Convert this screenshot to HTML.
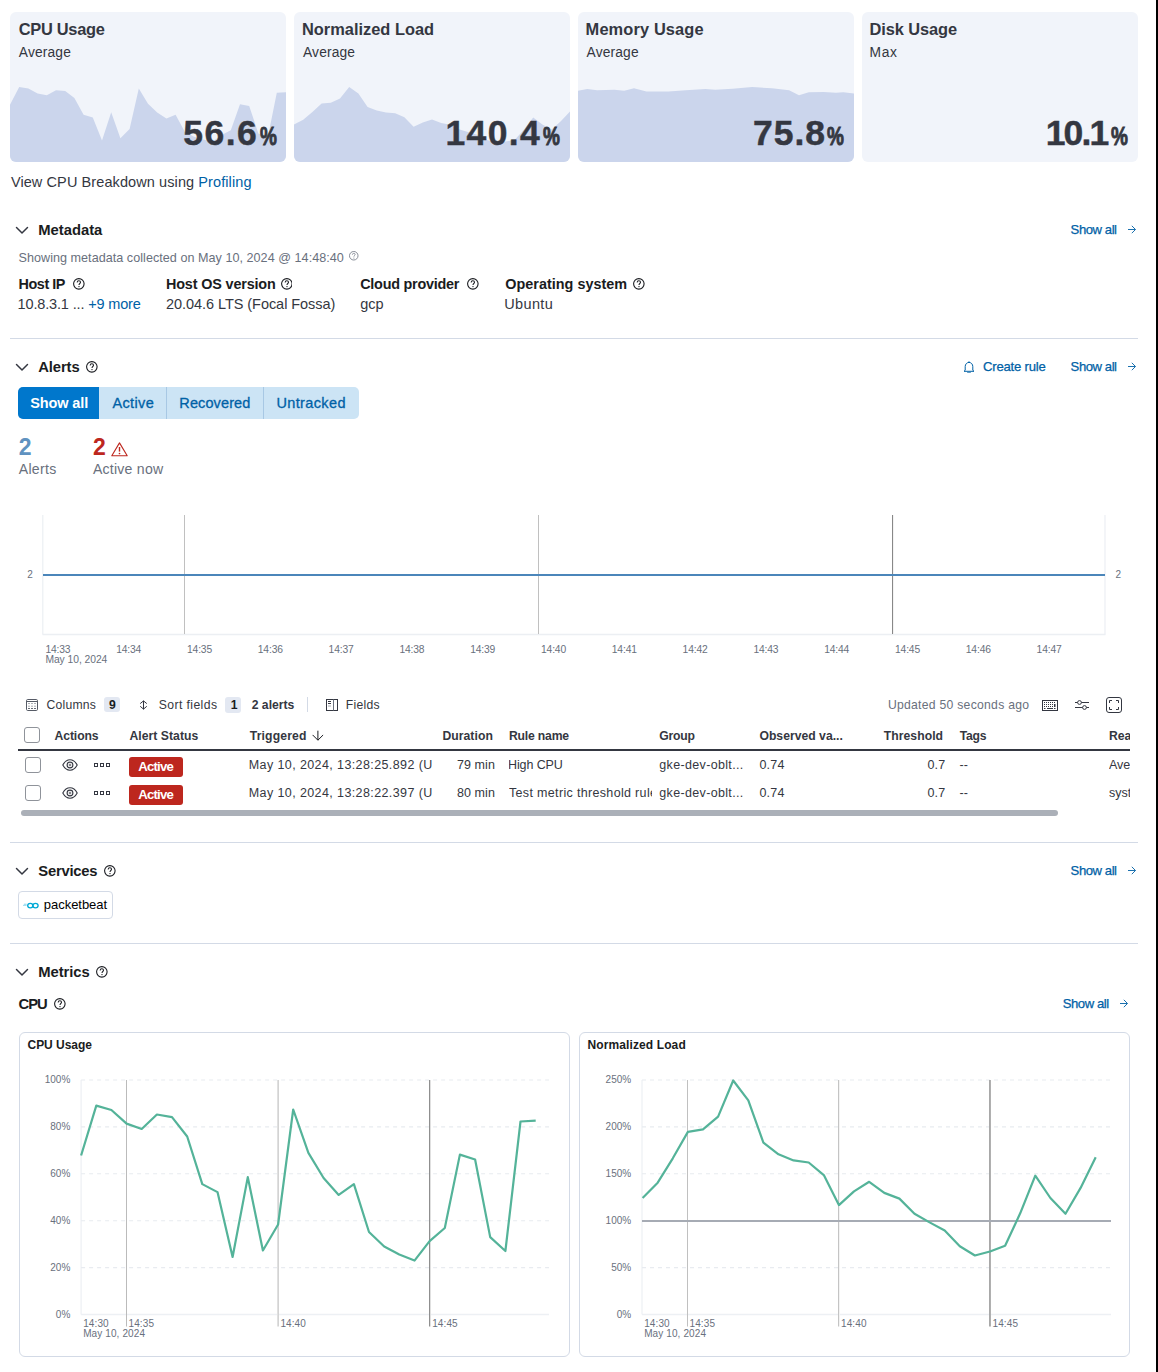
<!DOCTYPE html><html><head><meta charset="utf-8"><title>Host</title><style>
*{box-sizing:border-box;margin:0;padding:0}
html,body{width:1158px;height:1372px;overflow:hidden;background:#fff}
body{position:relative;font-family:"Liberation Sans",sans-serif;color:#343741}
.a{position:absolute;white-space:nowrap;line-height:1}
.card{position:absolute;top:12px;width:276px;height:150px;background:#f1f4fa;border-radius:6px;overflow:hidden}
.hr{position:absolute;left:10px;width:1128px;height:1px;background:#d3dae6}
</style></head><body><div class="card" style="left:10px"><svg width="276" height="150" style="position:absolute;left:0;top:0"><path d="M0,150 L0.0,92.7 L9.2,75.0 L18.4,76.6 L27.6,81.4 L36.8,83.3 L46.0,78.2 L55.2,79.1 L64.4,86.0 L73.6,102.8 L82.8,105.6 L92.0,128.5 L101.2,100.3 L110.4,126.2 L119.6,117.0 L128.8,76.4 L138.0,91.8 L147.2,100.6 L156.4,106.6 L165.6,102.8 L174.8,119.7 L184.0,124.8 L193.2,127.6 L202.4,129.8 L211.6,122.9 L220.8,118.2 L230.0,92.3 L239.2,94.1 L248.4,121.5 L257.6,126.4 L266.8,80.7 L276.0,80.3 L276,150 Z" fill="#cbd5ec"/></svg></div><div class="card" style="left:294px"><svg width="276" height="150" style="position:absolute;left:0;top:0"><path d="M0,150 L0.0,112.6 L9.2,107.7 L18.4,99.9 L27.6,91.5 L36.8,90.7 L46.0,86.6 L55.2,75.1 L64.4,81.4 L73.6,94.9 L82.8,98.6 L92.0,100.6 L101.2,101.2 L110.4,105.3 L119.6,114.8 L128.8,110.5 L138.0,107.4 L147.2,110.9 L156.4,112.7 L165.6,117.6 L174.8,120.3 L184.0,122.9 L193.2,128.0 L202.4,130.9 L211.6,129.6 L220.8,127.8 L230.0,117.4 L239.2,105.4 L248.4,112.6 L257.6,117.6 L266.8,109.3 L276.0,99.6 L276,150 Z" fill="#cbd5ec"/></svg></div><div class="card" style="left:578px"><svg width="276" height="150" style="position:absolute;left:0;top:0"><path d="M0,150 L0.0,78.7 L9.3,77.0 L19.2,78.3 L36.4,77.8 L46.2,78.7 L56.0,76.3 L68.4,79.5 L90.5,79.5 L107.8,78.3 L127.4,77.0 L137.3,77.8 L154.5,76.8 L174.2,75.1 L193.9,76.3 L211.1,78.3 L221.0,83.2 L230.8,80.2 L245.6,80.0 L257.9,80.7 L265.3,80.2 L276.0,81.4 L276,150 Z" fill="#cbd5ec"/></svg></div><div class="card" style="left:862px"></div><div class="a" style="left:18.80px;top:21.20px;font-size:16.4px;color:#343741;font-weight:700;letter-spacing:-0.293px;">CPU Usage</div><div class="a" style="left:302.00px;top:21.20px;font-size:16.4px;color:#343741;font-weight:700;">Normalized Load</div><div class="a" style="left:585.60px;top:21.20px;font-size:16.4px;color:#343741;font-weight:700;letter-spacing:0.129px;">Memory Usage</div><div class="a" style="left:869.50px;top:21.20px;font-size:16.4px;color:#343741;font-weight:700;letter-spacing:-0.084px;">Disk Usage</div><div class="a" style="left:18.80px;top:45.90px;font-size:13.8px;color:#343741;letter-spacing:0.156px;">Average</div><div class="a" style="left:303.00px;top:45.90px;font-size:13.8px;color:#343741;letter-spacing:0.139px;">Average</div><div class="a" style="left:586.60px;top:45.90px;font-size:13.8px;color:#343741;letter-spacing:0.139px;">Average</div><div class="a" style="left:869.50px;top:45.90px;font-size:13.8px;color:#343741;letter-spacing:0.667px;">Max</div><div class="a" style="left:183.30px;top:115.65px;font-size:35.5px;color:#343741;font-weight:700;letter-spacing:1.450px;-webkit-text-stroke:0.45px #343741;">56.6</div><div class="a" style="left:259.5px;top:123.5px;font-size:25px;font-weight:700;color:#343741;transform:scaleX(0.76);transform-origin:0 0;-webkit-text-stroke:0.9px #343741">%</div><div class="a" style="left:445.50px;top:115.65px;font-size:35.5px;color:#343741;font-weight:700;letter-spacing:1.352px;-webkit-text-stroke:0.45px #343741;">140.4</div><div class="a" style="left:542.8px;top:123.5px;font-size:25px;font-weight:700;color:#343741;transform:scaleX(0.76);transform-origin:0 0;-webkit-text-stroke:0.9px #343741">%</div><div class="a" style="left:753.00px;top:115.65px;font-size:35.5px;color:#343741;font-weight:700;letter-spacing:0.983px;-webkit-text-stroke:0.45px #343741;">75.8</div><div class="a" style="left:827.3px;top:123.5px;font-size:25px;font-weight:700;color:#343741;transform:scaleX(0.76);transform-origin:0 0;-webkit-text-stroke:0.9px #343741">%</div><div class="a" style="left:1045.70px;top:115.65px;font-size:35.5px;color:#343741;font-weight:700;letter-spacing:-1.817px;-webkit-text-stroke:0.45px #343741;">10.1</div><div class="a" style="left:1110.5px;top:123.5px;font-size:25px;font-weight:700;color:#343741;transform:scaleX(0.76);transform-origin:0 0;-webkit-text-stroke:0.9px #343741">%</div><div class="a" style="left:10.90px;top:175.15px;font-size:14.5px;color:#343741;letter-spacing:0.093px;">View CPU Breakdown using <span style="color:#0061a6">Profiling</span></div><svg class="a" style="left:15.3px;top:226.1px" width="14" height="8" viewBox="0 0 14 8"><path d="M1.5 1.5 L7 6.9 L12.5 1.5" fill="none" stroke="#343741" stroke-width="1.45" stroke-linecap="round" stroke-linejoin="round"/></svg><div class="a" style="left:38.30px;top:223.20px;font-size:14.8px;color:#1a1c21;font-weight:700;letter-spacing:-0.015px;">Metadata</div><div class="a" style="left:1070.60px;top:223.35px;font-size:13.1px;color:#0061a6;letter-spacing:-0.440px;-webkit-text-stroke:0.25px #0061a6;">Show all</div><svg class="a" style="left:1128.3px;top:224.8px" width="8" height="9" viewBox="0 0 8 9"><path d="M0 4.5 H7.3 M3.8 0.8 L7.5 4.5 L3.8 8.2" fill="none" stroke="#0061a6" stroke-width="0.9"/></svg><div class="a" style="left:18.50px;top:252.10px;font-size:12.6px;color:#69707d;letter-spacing:0.032px;">Showing metadata collected on May 10, 2024 @ 14:48:40</div><svg class="a" style="left:349px;top:251.2px" width="9.5" height="9.5" viewBox="0 0 16 16"><circle cx="8" cy="8" r="7.2" fill="none" stroke="#7a808c" stroke-width="1.5"/><path d="M5.7 6.2 C5.7 4.8 6.7 3.9 8 3.9 C9.4 3.9 10.3 4.8 10.3 5.9 C10.3 7.5 8.2 7.6 8.2 9.5" fill="none" stroke="#7a808c" stroke-width="1.4"/><circle cx="8.2" cy="11.8" r="0.95" fill="#7a808c"/></svg><div class="a" style="left:18.60px;top:277.20px;font-size:14.4px;color:#1a1c21;font-weight:700;letter-spacing:-0.462px;">Host IP</div><svg class="a" style="left:73.3px;top:278.2px" width="11.7" height="11.7" viewBox="0 0 16 16"><circle cx="8" cy="8" r="7.2" fill="none" stroke="#1a1c21" stroke-width="1.5"/><path d="M5.7 6.2 C5.7 4.8 6.7 3.9 8 3.9 C9.4 3.9 10.3 4.8 10.3 5.9 C10.3 7.5 8.2 7.6 8.2 9.5" fill="none" stroke="#1a1c21" stroke-width="1.4"/><circle cx="8.2" cy="11.8" r="0.95" fill="#1a1c21"/></svg><div class="a" style="left:17.60px;top:297.15px;font-size:14.5px;color:#343741;letter-spacing:-0.152px;">10.8.3.1 ... <span style="color:#0061a6">+9 more</span></div><div class="a" style="left:166.00px;top:277.20px;font-size:14.4px;color:#1a1c21;font-weight:700;letter-spacing:-0.155px;">Host OS version</div><svg class="a" style="left:280.8px;top:278.2px" width="11.7" height="11.7" viewBox="0 0 16 16"><circle cx="8" cy="8" r="7.2" fill="none" stroke="#1a1c21" stroke-width="1.5"/><path d="M5.7 6.2 C5.7 4.8 6.7 3.9 8 3.9 C9.4 3.9 10.3 4.8 10.3 5.9 C10.3 7.5 8.2 7.6 8.2 9.5" fill="none" stroke="#1a1c21" stroke-width="1.4"/><circle cx="8.2" cy="11.8" r="0.95" fill="#1a1c21"/></svg><div class="a" style="left:166.00px;top:297.15px;font-size:14.5px;color:#343741;letter-spacing:-0.052px;">20.04.6 LTS (Focal Fossa)</div><div class="a" style="left:360.20px;top:277.20px;font-size:14.4px;color:#1a1c21;font-weight:700;letter-spacing:-0.241px;">Cloud provider</div><svg class="a" style="left:467.3px;top:278.2px" width="11.7" height="11.7" viewBox="0 0 16 16"><circle cx="8" cy="8" r="7.2" fill="none" stroke="#1a1c21" stroke-width="1.5"/><path d="M5.7 6.2 C5.7 4.8 6.7 3.9 8 3.9 C9.4 3.9 10.3 4.8 10.3 5.9 C10.3 7.5 8.2 7.6 8.2 9.5" fill="none" stroke="#1a1c21" stroke-width="1.4"/><circle cx="8.2" cy="11.8" r="0.95" fill="#1a1c21"/></svg><div class="a" style="left:360.20px;top:297.15px;font-size:14.5px;color:#343741;">gcp</div><div class="a" style="left:505.30px;top:277.20px;font-size:14.4px;color:#1a1c21;font-weight:700;letter-spacing:0.016px;">Operating system</div><svg class="a" style="left:633.3px;top:278.2px" width="11.7" height="11.7" viewBox="0 0 16 16"><circle cx="8" cy="8" r="7.2" fill="none" stroke="#1a1c21" stroke-width="1.5"/><path d="M5.7 6.2 C5.7 4.8 6.7 3.9 8 3.9 C9.4 3.9 10.3 4.8 10.3 5.9 C10.3 7.5 8.2 7.6 8.2 9.5" fill="none" stroke="#1a1c21" stroke-width="1.4"/><circle cx="8.2" cy="11.8" r="0.95" fill="#1a1c21"/></svg><div class="a" style="left:504.30px;top:297.15px;font-size:14.5px;color:#343741;letter-spacing:0.341px;">Ubuntu</div><div class="hr" style="top:338px"></div><svg class="a" style="left:15.3px;top:363.1px" width="14" height="8" viewBox="0 0 14 8"><path d="M1.5 1.5 L7 6.9 L12.5 1.5" fill="none" stroke="#343741" stroke-width="1.45" stroke-linecap="round" stroke-linejoin="round"/></svg><div class="a" style="left:38.30px;top:359.90px;font-size:14.8px;color:#1a1c21;font-weight:700;letter-spacing:-0.122px;">Alerts</div><svg class="a" style="left:86px;top:361.2px" width="11.7" height="11.7" viewBox="0 0 16 16"><circle cx="8" cy="8" r="7.2" fill="none" stroke="#1a1c21" stroke-width="1.5"/><path d="M5.7 6.2 C5.7 4.8 6.7 3.9 8 3.9 C9.4 3.9 10.3 4.8 10.3 5.9 C10.3 7.5 8.2 7.6 8.2 9.5" fill="none" stroke="#1a1c21" stroke-width="1.4"/><circle cx="8.2" cy="11.8" r="0.95" fill="#1a1c21"/></svg><svg class="a" style="left:963px;top:360.5px" width="12" height="12.5" viewBox="0 0 12 12.5"><path d="M2.2 9.3 V5.6 C2.2 3.2 3.9 1.4 6 1.4 C8.1 1.4 9.8 3.2 9.8 5.6 V9.3 L11 10.3 H1 Z" fill="none" stroke="#0061a6" stroke-width="1"/><path d="M6 0.3 V1.4 M4.6 11 C4.8 11.8 5.3 12.2 6 12.2 C6.7 12.2 7.2 11.8 7.4 11" fill="none" stroke="#0061a6" stroke-width="1"/></svg><div class="a" style="left:983.00px;top:360.35px;font-size:13.1px;color:#0061a6;letter-spacing:-0.209px;-webkit-text-stroke:0.25px #0061a6;">Create rule</div><div class="a" style="left:1070.60px;top:360.35px;font-size:13.1px;color:#0061a6;letter-spacing:-0.440px;-webkit-text-stroke:0.25px #0061a6;">Show all</div><svg class="a" style="left:1128.3px;top:361.8px" width="8" height="9" viewBox="0 0 8 9"><path d="M0 4.5 H7.3 M3.8 0.8 L7.5 4.5 L3.8 8.2" fill="none" stroke="#0061a6" stroke-width="0.9"/></svg><div class="a" style="left:18px;top:387px;width:341px;height:32px;background:#cce4f5;border-radius:5px;overflow:hidden"><div class="a" style="left:0;top:0;width:81px;height:32px;background:#0077cc"></div><div class="a" style="left:148px;top:0;width:1px;height:32px;background:#a8c8e4"></div><div class="a" style="left:245px;top:0;width:1px;height:32px;background:#a8c8e4"></div></div><div class="a" style="left:30.20px;top:395.65px;font-size:14.5px;color:#fff;font-weight:700;letter-spacing:-0.112px;">Show all</div><div class="a" style="left:112.40px;top:395.65px;font-size:14.5px;color:#0061a6;letter-spacing:0.376px;-webkit-text-stroke:0.3px #0061a6;">Active</div><div class="a" style="left:179.30px;top:395.65px;font-size:14.5px;color:#0061a6;letter-spacing:0.118px;-webkit-text-stroke:0.3px #0061a6;">Recovered</div><div class="a" style="left:276.40px;top:395.65px;font-size:14.5px;color:#0061a6;letter-spacing:0.372px;-webkit-text-stroke:0.3px #0061a6;">Untracked</div><div class="a" style="left:18.70px;top:435.70px;font-size:23px;color:#6092c0;font-weight:700;">2</div><div class="a" style="left:92.90px;top:435.70px;font-size:23px;color:#bd271e;font-weight:700;">2</div><svg class="a" style="left:111px;top:442px" width="17" height="14.5" viewBox="0 0 17 14.5"><path d="M8.5 0.9 L16.2 13.8 H0.8 Z" fill="none" stroke="#bd271e" stroke-width="1.1" stroke-linejoin="round"/><path d="M8.5 5 V9.6" stroke="#bd271e" stroke-width="1.4"/><circle cx="8.5" cy="11.5" r="0.85" fill="#bd271e"/></svg><div class="a" style="left:18.70px;top:462.35px;font-size:14.1px;color:#69707d;letter-spacing:0.304px;">Alerts</div><div class="a" style="left:92.90px;top:462.35px;font-size:14.1px;color:#69707d;letter-spacing:0.236px;">Active now</div><svg class="a" style="left:0;top:500px" width="1158" height="175"><line x1="42.8" y1="15" x2="42.8" y2="134.5" stroke="#eceff3" stroke-width="1.2"/><line x1="1105" y1="15" x2="1105" y2="134.5" stroke="#eceff3" stroke-width="1.2"/><line x1="42.5" y1="134.4" x2="1105.5" y2="134.4" stroke="#eceff3" stroke-width="1.5"/><rect x="184" y="15" width="1" height="119" fill="#c0c0c0"/><rect x="538" y="15" width="1" height="119" fill="#c0c0c0"/><rect x="892" y="15" width="1" height="119" fill="#888888"/><rect x="893" y="15" width="1" height="119" fill="#f3f3f3"/><rect x="43" y="74" width="1062" height="2" fill="#4b86ba"/></svg><div class="a" style="left:27.30px;top:569.90px;font-size:10px;color:#69707d;">2</div><div class="a" style="left:1115.50px;top:569.90px;font-size:10px;color:#69707d;">2</div><div class="a" style="left:45.40px;top:645.35px;font-size:10.3px;color:#69707d;letter-spacing:-0.160px;">14:33</div><div class="a" style="left:116.20px;top:645.35px;font-size:10.3px;color:#69707d;letter-spacing:-0.160px;">14:34</div><div class="a" style="left:187.00px;top:645.35px;font-size:10.3px;color:#69707d;letter-spacing:-0.160px;">14:35</div><div class="a" style="left:257.80px;top:645.35px;font-size:10.3px;color:#69707d;letter-spacing:-0.160px;">14:36</div><div class="a" style="left:328.60px;top:645.35px;font-size:10.3px;color:#69707d;letter-spacing:-0.160px;">14:37</div><div class="a" style="left:399.40px;top:645.35px;font-size:10.3px;color:#69707d;letter-spacing:-0.160px;">14:38</div><div class="a" style="left:470.20px;top:645.35px;font-size:10.3px;color:#69707d;letter-spacing:-0.160px;">14:39</div><div class="a" style="left:541.00px;top:645.35px;font-size:10.3px;color:#69707d;letter-spacing:-0.160px;">14:40</div><div class="a" style="left:611.80px;top:645.35px;font-size:10.3px;color:#69707d;letter-spacing:-0.160px;">14:41</div><div class="a" style="left:682.60px;top:645.35px;font-size:10.3px;color:#69707d;letter-spacing:-0.160px;">14:42</div><div class="a" style="left:753.40px;top:645.35px;font-size:10.3px;color:#69707d;letter-spacing:-0.160px;">14:43</div><div class="a" style="left:824.20px;top:645.35px;font-size:10.3px;color:#69707d;letter-spacing:-0.160px;">14:44</div><div class="a" style="left:895.00px;top:645.35px;font-size:10.3px;color:#69707d;letter-spacing:-0.160px;">14:45</div><div class="a" style="left:965.80px;top:645.35px;font-size:10.3px;color:#69707d;letter-spacing:-0.160px;">14:46</div><div class="a" style="left:1036.60px;top:645.35px;font-size:10.3px;color:#69707d;letter-spacing:-0.160px;">14:47</div><div class="a" style="left:45.40px;top:655.35px;font-size:10.3px;color:#69707d;letter-spacing:-0.043px;">May 10, 2024</div><svg class="a" style="left:26px;top:699px" width="12" height="12" viewBox="0 0 12 12"><rect x="0.5" y="0.5" width="11" height="11" rx="1.2" fill="none" stroke="#565b66" stroke-width="1"/><path d="M0.5 2.5 H11.5" stroke="#565b66" stroke-width="1"/><path d="M2 4.5 H10 M2 7.2 H10" stroke="#a3a7ae" stroke-width="0.9" stroke-dasharray="2 1"/><path d="M2 9.5 H10" stroke="#565b66" stroke-width="0.9" stroke-dasharray="2 1"/></svg><div class="a" style="left:46.50px;top:698.90px;font-size:12.2px;color:#343741;letter-spacing:0.217px;">Columns</div><div class="a" style="left:104px;top:697.2px;width:15.7px;height:15.3px;background:#e3e8f2;border-radius:3px"></div><div class="a" style="left:109.00px;top:698.90px;font-size:12.2px;color:#1a1c21;font-weight:700;">9</div><svg class="a" style="left:139px;top:700px" width="9" height="10" viewBox="0 0 9 10"><path d="M4.5 0.9 V9.2 M1.2 3.6 L4.5 0.9 L7.8 3.6 M1.2 6.3 L4.5 9.1 L7.8 6.3" fill="none" stroke="#343741" stroke-width="1"/></svg><div class="a" style="left:158.80px;top:699.10px;font-size:12.2px;color:#343741;letter-spacing:0.400px;">Sort fields</div><div class="a" style="left:225px;top:697px;width:15.8px;height:15.7px;background:#e3e8f2;border-radius:3px"></div><div class="a" style="left:230.70px;top:698.90px;font-size:12.2px;color:#1a1c21;font-weight:700;">1</div><div class="a" style="left:251.70px;top:698.90px;font-size:12.2px;color:#343741;font-weight:700;">2 alerts</div><div class="a" style="left:307px;top:697px;width:1px;height:15px;background:#d3dae6"></div><svg class="a" style="left:326px;top:699px" width="12" height="12" viewBox="0 0 12 12"><rect x="0.5" y="0.5" width="11" height="11" fill="none" stroke="#343741" stroke-width="1"/><path d="M7.5 0.5 V11.5" stroke="#69707d" stroke-width="1"/><path d="M2 2.5 H5 M2 4.5 H5" stroke="#343741" stroke-width="1"/><path d="M2 7 H5" stroke="#a3a7ae" stroke-width="1"/></svg><div class="a" style="left:345.70px;top:698.90px;font-size:12.2px;color:#343741;letter-spacing:0.277px;">Fields</div><div class="a" style="left:887.90px;top:698.90px;font-size:12.2px;color:#69707d;letter-spacing:0.269px;">Updated 50 seconds ago</div><svg class="a" style="left:1042px;top:700px" width="16" height="11" viewBox="0 0 16 11"><rect x="0.5" y="0.5" width="15" height="10" fill="none" stroke="#343741" stroke-width="1"/><rect x="2" y="2" width="1" height="1" fill="#343741"/><rect x="4" y="2" width="1" height="1" fill="#343741"/><rect x="6" y="2" width="1" height="1" fill="#343741"/><rect x="8" y="2" width="1" height="1" fill="#343741"/><rect x="10" y="2" width="1" height="1" fill="#343741"/><rect x="12" y="2" width="1" height="1" fill="#343741"/><rect x="2" y="4" width="1" height="1" fill="#343741"/><rect x="4" y="4" width="1" height="1" fill="#343741"/><rect x="6" y="4" width="1" height="1" fill="#343741"/><rect x="8" y="4" width="1" height="1" fill="#343741"/><rect x="10" y="4" width="1" height="1" fill="#343741"/><rect x="2" y="6" width="1" height="1" fill="#343741"/><rect x="4" y="6" width="1" height="1" fill="#343741"/><rect x="6" y="6" width="1" height="1" fill="#343741"/><rect x="8" y="6" width="1" height="1" fill="#343741"/><rect x="10" y="6" width="1" height="1" fill="#343741"/><rect x="12" y="4" width="1.5" height="3" fill="#343741"/><rect x="2" y="8" width="1.5" height="1" fill="#343741"/><rect x="5" y="8" width="6" height="1" fill="#343741"/><rect x="12" y="8" width="1.5" height="1" fill="#343741"/></svg><svg class="a" style="left:1075px;top:700px" width="14" height="10" viewBox="0 0 14 10"><path d="M0 2.5 H14 M0 7.5 H14" stroke="#343741" stroke-width="1"/><circle cx="4.5" cy="2.5" r="1.9" fill="#fff" stroke="#343741" stroke-width="1"/><circle cx="9.5" cy="7.5" r="1.9" fill="#fff" stroke="#343741" stroke-width="1"/></svg><svg class="a" style="left:1106px;top:697px" width="16" height="16" viewBox="0 0 16 16"><rect x="0.5" y="0.5" width="15" height="15" rx="2.5" fill="none" stroke="#343741" stroke-width="1"/><path d="M3.5 6 V3.5 H6 M10 3.5 H12.5 V6 M12.5 10 V12.5 H10 M6 12.5 H3.5 V10" fill="none" stroke="#343741" stroke-width="1"/></svg><div class="a" style="left:24.4px;top:727.3px;width:15.5px;height:15.5px;border:1px solid #8f939a;border-radius:3px;background:#fff"></div><div class="a" style="left:54.60px;top:729.50px;font-size:12.2px;color:#343741;font-weight:700;letter-spacing:-0.119px;">Actions</div><div class="a" style="left:129.50px;top:729.50px;font-size:12.2px;color:#343741;font-weight:700;letter-spacing:0.034px;">Alert Status</div><div class="a" style="left:249.80px;top:729.50px;font-size:12.2px;color:#343741;font-weight:700;letter-spacing:0.139px;">Triggered</div><div class="a" style="left:442.40px;top:729.50px;font-size:12.2px;color:#343741;font-weight:700;letter-spacing:0.049px;">Duration</div><div class="a" style="left:509.00px;top:729.50px;font-size:12.2px;color:#343741;font-weight:700;letter-spacing:-0.194px;">Rule name</div><div class="a" style="left:659.30px;top:729.50px;font-size:12.2px;color:#343741;font-weight:700;letter-spacing:-0.253px;">Group</div><div class="a" style="left:759.40px;top:729.50px;font-size:12.2px;color:#343741;font-weight:700;letter-spacing:0.012px;">Observed va...</div><div class="a" style="left:883.70px;top:729.50px;font-size:12.2px;color:#343741;font-weight:700;letter-spacing:0.055px;">Threshold</div><div class="a" style="left:959.80px;top:729.50px;font-size:12.2px;color:#343741;font-weight:700;letter-spacing:-0.254px;">Tags</div><div class="a" style="left:1109px;top:725px;width:21px;height:20px;overflow:hidden"><div class="a" style="left:0.00px;top:5.00px;font-size:12.2px;color:#343741;font-weight:700;">Reason</div></div><svg class="a" style="left:311.5px;top:729.5px" width="12" height="11" viewBox="0 0 12 11"><path d="M5.9 0.7 V10.2 M0.6 4.9 L5.9 10.2 L11.1 5" fill="none" stroke="#1a1c21" stroke-width="1"/></svg><div class="a" style="left:18px;top:748.6px;width:1112px;height:2.2px;background:#343741"></div><div class="a" style="left:25px;top:757px;width:15.5px;height:15.5px;border:1px solid #8f939a;border-radius:3px;background:#fff"></div><svg class="a" style="left:62px;top:759px" width="16" height="12" viewBox="0 0 16 12"><path d="M0.8 6 C2.8 2.3 5.3 0.8 8 0.8 C10.7 0.8 13.2 2.3 15.2 6 C13.2 9.7 10.7 11.2 8 11.2 C5.3 11.2 2.8 9.7 0.8 6 Z" fill="none" stroke="#343741" stroke-width="1.1"/><circle cx="8" cy="6" r="2.9" fill="none" stroke="#343741" stroke-width="1.1"/><circle cx="8" cy="6" r="0.9" fill="none" stroke="#343741" stroke-width="0.7"/></svg><svg class="a" style="left:94px;top:763px" width="17" height="5" viewBox="0 0 17 5"><rect x="0.5" y="0.5" width="3" height="3" fill="none" stroke="#343741" stroke-width="1"/><rect x="6.5" y="0.5" width="3" height="3" fill="none" stroke="#343741" stroke-width="1"/><rect x="12.5" y="0.5" width="3" height="3" fill="none" stroke="#343741" stroke-width="1"/></svg><div class="a" style="left:129px;top:757px;width:54px;height:19.7px;background:#bd271e;border-radius:3px"></div><div class="a" style="left:138.30px;top:760.20px;font-size:13.2px;color:#fff;font-weight:700;letter-spacing:-0.810px;">Active</div><div class="a" style="left:248.80px;top:758.95px;font-size:12.5px;color:#343741;letter-spacing:0.396px;">May 10, 2024, 13:28:25.892 (U</div><div class="a" style="left:456.90px;top:758.95px;font-size:12.5px;color:#343741;letter-spacing:0.107px;">79 min</div><div class="a" style="left:509px;top:757px;width:143px;height:20px;overflow:hidden"><div class="a" style="left:-1.00px;top:1.95px;font-size:12.5px;color:#343741;letter-spacing:-0.106px;">High CPU</div></div><div class="a" style="left:659.30px;top:758.95px;font-size:12.5px;color:#343741;letter-spacing:0.341px;">gke-dev-oblt...</div><div class="a" style="left:759.40px;top:758.95px;font-size:12.5px;color:#343741;letter-spacing:0.241px;">0.74</div><div class="a" style="left:927.40px;top:758.95px;font-size:12.5px;color:#343741;letter-spacing:0.238px;">0.7</div><div class="a" style="left:959.50px;top:758.95px;font-size:12.5px;color:#343741;">--</div><div class="a" style="left:1109px;top:757px;width:21px;height:20px;overflow:hidden"><div class="a" style="left:0.00px;top:1.95px;font-size:12.5px;color:#343741;">Average</div></div><div class="a" style="left:25px;top:785px;width:15.5px;height:15.5px;border:1px solid #8f939a;border-radius:3px;background:#fff"></div><svg class="a" style="left:62px;top:787px" width="16" height="12" viewBox="0 0 16 12"><path d="M0.8 6 C2.8 2.3 5.3 0.8 8 0.8 C10.7 0.8 13.2 2.3 15.2 6 C13.2 9.7 10.7 11.2 8 11.2 C5.3 11.2 2.8 9.7 0.8 6 Z" fill="none" stroke="#343741" stroke-width="1.1"/><circle cx="8" cy="6" r="2.9" fill="none" stroke="#343741" stroke-width="1.1"/><circle cx="8" cy="6" r="0.9" fill="none" stroke="#343741" stroke-width="0.7"/></svg><svg class="a" style="left:94px;top:791px" width="17" height="5" viewBox="0 0 17 5"><rect x="0.5" y="0.5" width="3" height="3" fill="none" stroke="#343741" stroke-width="1"/><rect x="6.5" y="0.5" width="3" height="3" fill="none" stroke="#343741" stroke-width="1"/><rect x="12.5" y="0.5" width="3" height="3" fill="none" stroke="#343741" stroke-width="1"/></svg><div class="a" style="left:129px;top:785px;width:54px;height:19.7px;background:#bd271e;border-radius:3px"></div><div class="a" style="left:138.30px;top:788.20px;font-size:13.2px;color:#fff;font-weight:700;letter-spacing:-0.810px;">Active</div><div class="a" style="left:248.80px;top:787.25px;font-size:12.5px;color:#343741;letter-spacing:0.396px;">May 10, 2024, 13:28:22.397 (U</div><div class="a" style="left:456.90px;top:787.25px;font-size:12.5px;color:#343741;letter-spacing:0.107px;">80 min</div><div class="a" style="left:509px;top:785px;width:143px;height:20px;overflow:hidden"><div class="a" style="left:0.00px;top:2.25px;font-size:12.5px;color:#343741;letter-spacing:0.333px;">Test metric threshold rule</div></div><div class="a" style="left:659.30px;top:787.25px;font-size:12.5px;color:#343741;letter-spacing:0.341px;">gke-dev-oblt...</div><div class="a" style="left:759.40px;top:787.25px;font-size:12.5px;color:#343741;letter-spacing:0.241px;">0.74</div><div class="a" style="left:927.40px;top:787.25px;font-size:12.5px;color:#343741;letter-spacing:0.238px;">0.7</div><div class="a" style="left:959.50px;top:787.25px;font-size:12.5px;color:#343741;">--</div><div class="a" style="left:1109px;top:785px;width:21px;height:20px;overflow:hidden"><div class="a" style="left:0.00px;top:2.25px;font-size:12.5px;color:#343741;">system</div></div><div class="a" style="left:21px;top:810.3px;width:1037px;height:5.8px;background:#abb0b8;border-radius:3px"></div><div class="hr" style="top:842px"></div><svg class="a" style="left:15.3px;top:867.1px" width="14" height="8" viewBox="0 0 14 8"><path d="M1.5 1.5 L7 6.9 L12.5 1.5" fill="none" stroke="#343741" stroke-width="1.45" stroke-linecap="round" stroke-linejoin="round"/></svg><div class="a" style="left:38.30px;top:863.80px;font-size:14.8px;color:#1a1c21;font-weight:700;letter-spacing:-0.251px;">Services</div><svg class="a" style="left:104.2px;top:865.4px" width="11.7" height="11.7" viewBox="0 0 16 16"><circle cx="8" cy="8" r="7.2" fill="none" stroke="#1a1c21" stroke-width="1.5"/><path d="M5.7 6.2 C5.7 4.8 6.7 3.9 8 3.9 C9.4 3.9 10.3 4.8 10.3 5.9 C10.3 7.5 8.2 7.6 8.2 9.5" fill="none" stroke="#1a1c21" stroke-width="1.4"/><circle cx="8.2" cy="11.8" r="0.95" fill="#1a1c21"/></svg><div class="a" style="left:1070.60px;top:864.35px;font-size:13.1px;color:#0061a6;letter-spacing:-0.440px;-webkit-text-stroke:0.25px #0061a6;">Show all</div><svg class="a" style="left:1128.3px;top:865.8px" width="8" height="9" viewBox="0 0 8 9"><path d="M0 4.5 H7.3 M3.8 0.8 L7.5 4.5 L3.8 8.2" fill="none" stroke="#0061a6" stroke-width="0.9"/></svg><div class="a" style="left:18px;top:891px;width:95px;height:27.6px;border:1px solid #d3dae6;border-radius:4px;background:#fff"></div><svg class="a" style="left:23px;top:902px" width="16" height="7" viewBox="0 0 16 7"><path d="M0 3.3 H3.6 M1 2.2 H3.6" stroke="#62c6e6" stroke-width="0.7"/><ellipse cx="7.3" cy="3.6" rx="2.6" ry="2.3" fill="none" stroke="#00a9d6" stroke-width="1.35"/><ellipse cx="12.5" cy="3.6" rx="2.6" ry="2.3" fill="none" stroke="#00a9d6" stroke-width="1.35"/></svg><div class="a" style="left:43.80px;top:898.20px;font-size:13px;color:#000;letter-spacing:-0.032px;">packetbeat</div><div class="hr" style="top:943px"></div><svg class="a" style="left:15.3px;top:968.1px" width="14" height="8" viewBox="0 0 14 8"><path d="M1.5 1.5 L7 6.9 L12.5 1.5" fill="none" stroke="#343741" stroke-width="1.45" stroke-linecap="round" stroke-linejoin="round"/></svg><div class="a" style="left:38.30px;top:964.80px;font-size:14.8px;color:#1a1c21;font-weight:700;letter-spacing:-0.064px;">Metrics</div><svg class="a" style="left:96.2px;top:966.2px" width="11.7" height="11.7" viewBox="0 0 16 16"><circle cx="8" cy="8" r="7.2" fill="none" stroke="#1a1c21" stroke-width="1.5"/><path d="M5.7 6.2 C5.7 4.8 6.7 3.9 8 3.9 C9.4 3.9 10.3 4.8 10.3 5.9 C10.3 7.5 8.2 7.6 8.2 9.5" fill="none" stroke="#1a1c21" stroke-width="1.4"/><circle cx="8.2" cy="11.8" r="0.95" fill="#1a1c21"/></svg><div class="a" style="left:18.60px;top:996.80px;font-size:14.8px;color:#1a1c21;font-weight:700;letter-spacing:-1.078px;">CPU</div><svg class="a" style="left:54.4px;top:998.2px" width="11.7" height="11.7" viewBox="0 0 16 16"><circle cx="8" cy="8" r="7.2" fill="none" stroke="#1a1c21" stroke-width="1.5"/><path d="M5.7 6.2 C5.7 4.8 6.7 3.9 8 3.9 C9.4 3.9 10.3 4.8 10.3 5.9 C10.3 7.5 8.2 7.6 8.2 9.5" fill="none" stroke="#1a1c21" stroke-width="1.4"/><circle cx="8.2" cy="11.8" r="0.95" fill="#1a1c21"/></svg><div class="a" style="left:1062.70px;top:997.15px;font-size:13.1px;color:#0061a6;letter-spacing:-0.440px;-webkit-text-stroke:0.25px #0061a6;">Show all</div><svg class="a" style="left:1120.4px;top:998.5999999999999px" width="8" height="9" viewBox="0 0 8 9"><path d="M0 4.5 H7.3 M3.8 0.8 L7.5 4.5 L3.8 8.2" fill="none" stroke="#0061a6" stroke-width="0.9"/></svg><div class="a" style="left:18.5px;top:1032.2px;width:551px;height:325px;border:1px solid #d3dae6;border-radius:6px;background:#fff"></div><div class="a" style="left:27.50px;top:1039.30px;font-size:12px;color:#1a1c21;font-weight:700;letter-spacing:-0.039px;">CPU Usage</div><svg class="a" style="left:0;top:1060px" width="1158" height="290"><line x1="81.1" y1="20.0" x2="81.1" y2="254.5" stroke="#edf0f4" stroke-width="1.2"/><line x1="81.1" y1="254.5" x2="549.0" y2="254.5" stroke="#edf0f4" stroke-width="1.5"/><line x1="81.1" y1="207.6" x2="549.0" y2="207.6" stroke="#e8ebf0" stroke-width="1.1" stroke-dasharray="4 4"/><line x1="81.1" y1="160.7" x2="549.0" y2="160.7" stroke="#e8ebf0" stroke-width="1.1" stroke-dasharray="4 4"/><line x1="81.1" y1="113.8" x2="549.0" y2="113.8" stroke="#e8ebf0" stroke-width="1.1" stroke-dasharray="4 4"/><line x1="81.1" y1="66.9" x2="549.0" y2="66.9" stroke="#e8ebf0" stroke-width="1.1" stroke-dasharray="4 4"/><line x1="81.1" y1="20.0" x2="549.0" y2="20.0" stroke="#e8ebf0" stroke-width="1.1" stroke-dasharray="4 4"/><rect x="126" y="20.0" width="1" height="246.5" fill="#bbbbbb"/><rect x="277" y="20.0" width="1" height="246.5" fill="#e0e0e0"/><rect x="278" y="20.0" width="1" height="246.5" fill="#d3d3d3"/><rect x="429" y="20.0" width="1" height="246.5" fill="#8f8f8f"/><rect x="430" y="20.0" width="1" height="246.5" fill="#e0e0e0"/><polyline points="81.1,95.5 96.3,45.6 111.4,50.0 126.6,63.6 141.7,69.0 156.9,54.5 172.0,57.1 187.2,76.5 202.3,124.1 217.5,132.1 232.6,197.0 247.8,117.1 262.9,190.5 278.1,164.5 293.2,49.5 308.4,92.9 323.6,118.0 338.7,134.9 353.9,124.1 369.0,172.0 384.2,186.5 399.3,194.5 414.5,200.6 429.6,181.1 444.8,168.0 459.9,94.6 475.1,99.5 490.2,177.1 505.4,191.0 520.5,61.5 535.7,60.6" fill="none" stroke="#54b399" stroke-width="2.2" stroke-linejoin="round"/></svg><div class="a" style="left:55.84px;top:1310.10px;font-size:10px;color:#69707d;">0%</div><div class="a" style="left:50.28px;top:1263.10px;font-size:10px;color:#69707d;">20%</div><div class="a" style="left:50.28px;top:1216.10px;font-size:10px;color:#69707d;">40%</div><div class="a" style="left:50.28px;top:1169.10px;font-size:10px;color:#69707d;">60%</div><div class="a" style="left:50.28px;top:1122.10px;font-size:10px;color:#69707d;">80%</div><div class="a" style="left:44.72px;top:1075.10px;font-size:10px;color:#69707d;">100%</div><div class="a" style="left:83.20px;top:1319.10px;font-size:10px;color:#69707d;letter-spacing:0.109px;">14:30</div><div class="a" style="left:128.50px;top:1319.10px;font-size:10px;color:#69707d;letter-spacing:0.109px;">14:35</div><div class="a" style="left:280.40px;top:1319.10px;font-size:10px;color:#69707d;letter-spacing:0.109px;">14:40</div><div class="a" style="left:432.20px;top:1319.10px;font-size:10px;color:#69707d;letter-spacing:0.109px;">14:45</div><div class="a" style="left:83.20px;top:1329.40px;font-size:10px;color:#69707d;letter-spacing:0.106px;">May 10, 2024</div><div class="a" style="left:578.5px;top:1032.2px;width:551px;height:325px;border:1px solid #d3dae6;border-radius:6px;background:#fff"></div><div class="a" style="left:587.50px;top:1039.30px;font-size:12px;color:#1a1c21;font-weight:700;letter-spacing:0.111px;">Normalized Load</div><svg class="a" style="left:0;top:1060px" width="1158" height="290"><line x1="642.0" y1="20.0" x2="642.0" y2="254.5" stroke="#edf0f4" stroke-width="1.2"/><line x1="642.0" y1="254.5" x2="1111.0" y2="254.5" stroke="#edf0f4" stroke-width="1.5"/><line x1="642.0" y1="207.6" x2="1111.0" y2="207.6" stroke="#e8ebf0" stroke-width="1.1" stroke-dasharray="4 4"/><line x1="642.0" y1="160.7" x2="1111.0" y2="160.7" stroke="#e8ebf0" stroke-width="1.1" stroke-dasharray="4 4"/><line x1="642.0" y1="113.8" x2="1111.0" y2="113.8" stroke="#e8ebf0" stroke-width="1.1" stroke-dasharray="4 4"/><line x1="642.0" y1="66.9" x2="1111.0" y2="66.9" stroke="#e8ebf0" stroke-width="1.1" stroke-dasharray="4 4"/><line x1="642.0" y1="20.0" x2="1111.0" y2="20.0" stroke="#e8ebf0" stroke-width="1.1" stroke-dasharray="4 4"/><rect x="687" y="20.0" width="1" height="246.5" fill="#c0c0c0"/><rect x="838" y="20.0" width="1" height="246.5" fill="#c4c4c4"/><rect x="839" y="20.0" width="1" height="246.5" fill="#f3f3f3"/><rect x="989" y="20.0" width="1" height="246.5" fill="#a8a8a8"/><rect x="990" y="20.0" width="1" height="246.5" fill="#b0b0b0"/><rect x="642.0" y="160" width="469.0" height="2" fill="#a6abb4"/><polyline points="642.6,138.0 657.7,122.7 672.8,98.3 687.9,71.9 703.0,69.3 718.1,56.6 733.2,20.5 748.3,40.4 763.4,82.6 778.5,94.3 793.6,100.4 808.7,102.5 823.8,115.1 838.9,145.1 854.0,131.4 869.2,121.8 884.3,132.9 899.4,138.6 914.5,153.8 929.6,162.4 944.7,170.5 959.8,186.3 974.9,195.5 990.0,191.5 1005.1,185.8 1020.2,153.3 1035.3,115.7 1050.4,138.0 1065.5,153.8 1080.6,127.9 1095.7,97.3" fill="none" stroke="#54b399" stroke-width="2.2" stroke-linejoin="round"/></svg><div class="a" style="left:616.74px;top:1310.10px;font-size:10px;color:#69707d;">0%</div><div class="a" style="left:611.18px;top:1263.10px;font-size:10px;color:#69707d;">50%</div><div class="a" style="left:605.62px;top:1216.10px;font-size:10px;color:#69707d;">100%</div><div class="a" style="left:605.62px;top:1169.10px;font-size:10px;color:#69707d;">150%</div><div class="a" style="left:605.62px;top:1122.10px;font-size:10px;color:#69707d;">200%</div><div class="a" style="left:605.62px;top:1075.10px;font-size:10px;color:#69707d;">250%</div><div class="a" style="left:644.20px;top:1319.10px;font-size:10px;color:#69707d;letter-spacing:0.109px;">14:30</div><div class="a" style="left:689.50px;top:1319.10px;font-size:10px;color:#69707d;letter-spacing:0.109px;">14:35</div><div class="a" style="left:841.00px;top:1319.10px;font-size:10px;color:#69707d;letter-spacing:0.109px;">14:40</div><div class="a" style="left:992.50px;top:1319.10px;font-size:10px;color:#69707d;letter-spacing:0.109px;">14:45</div><div class="a" style="left:644.20px;top:1329.40px;font-size:10px;color:#69707d;letter-spacing:0.106px;">May 10, 2024</div><div class="a" style="left:1156px;top:0;width:2px;height:1372px;background:#000"></div></body></html>
